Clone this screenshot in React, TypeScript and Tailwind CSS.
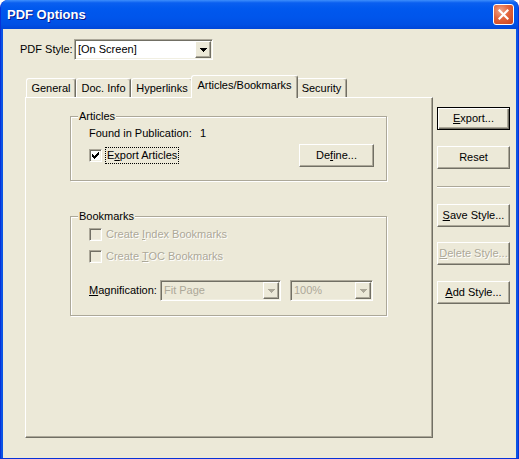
import React from "react";

const FONT = "font-['Liberation_Sans',Arial,sans-serif]";

const raised =
  "border border-t-white border-l-white border-r-[#716f64] border-b-[#716f64] shadow-[inset_-1px_-1px_0_#aca899]";
const sunken =
  "border border-t-[#aca899] border-l-[#aca899] border-r-white border-b-white shadow-[inset_1px_1px_0_#716f64,inset_-1px_-1px_0_#f1efe2]";
const disabledText = "text-[#aca899] [text-shadow:1px_1px_0_#ffffff]";

function Btn({
  children,
  w,
  def,
  disabled,
}: {
  children: React.ReactNode;
  w: string;
  def?: boolean;
  disabled?: boolean;
}) {
  const frame = def
    ? "border border-black shadow-[inset_1px_1px_0_#ffffff,inset_-1px_-1px_0_#716f64,inset_-2px_-2px_0_#aca899]"
    : raised;
  return (
    <div
      className={`${w} h-[23px] ${frame} bg-[#ece9d8] flex items-center justify-center text-[11px] leading-[13px] ${
        disabled ? disabledText : "text-black"
      }`}
    >
      {children}
    </div>
  );
}

function Arrow({ disabled }: { disabled?: boolean }) {
  return (
    <div className={`w-[16px] h-[17px] ${raised} bg-[#ece9d8] flex items-center justify-center`}>
      <svg width="7" height="4" viewBox="0 0 7 4" shapeRendering="crispEdges">
        <path d="M0 0H7V1H6V2H5V3H4V4H3V3H2V2H1V1H0Z" fill={disabled ? "#aca899" : "#000"} />
      </svg>
    </div>
  );
}

function Combo({
  text,
  w,
  disabled,
}: {
  text: string;
  w: string;
  disabled?: boolean;
}) {
  return (
    <div
      className={`${w} h-[21px] ${sunken} ${disabled ? "bg-[#ece9d8]" : "bg-white"} flex items-center justify-between pl-[3px] pr-[1px]`}
    >
      <span className={`text-[11px] leading-[13px] ${disabled ? "text-[#aca899]" : "text-black"}`}>{text}</span>
      <Arrow disabled={disabled} />
    </div>
  );
}

function Check({ checked, disabled }: { checked?: boolean; disabled?: boolean }) {
  return (
    <div className={`w-[13px] h-[13px] shrink-0 ${sunken} ${disabled ? "bg-[#ece9d8]" : "bg-white"} p-[1px]`}>
      {checked && (
        <svg width="9" height="9" viewBox="0 0 9 9" shapeRendering="crispEdges" className="block">
          <rect x="7" y="1" width="1" height="1" fill="#000" />
          <rect x="6" y="2" width="2" height="1" fill="#000" />
          <rect x="1" y="3" width="1" height="1" fill="#000" />
          <rect x="5" y="3" width="3" height="1" fill="#000" />
          <rect x="1" y="4" width="2" height="1" fill="#000" />
          <rect x="4" y="4" width="3" height="1" fill="#000" />
          <rect x="1" y="5" width="5" height="1" fill="#000" />
          <rect x="2" y="6" width="3" height="1" fill="#000" />
          <rect x="3" y="7" width="1" height="1" fill="#000" />
        </svg>
      )}
    </div>
  );
}

function Tab({ label, w, selected }: { label: string; w: string; selected?: boolean }) {
  if (selected) {
    return (
      <div
        className={`${w} h-[23px] -mb-[1px] -mx-[2px] relative z-10 bg-[#ece9d8] border-t border-l border-r border-t-white border-l-white border-r-[#716f64] shadow-[inset_-1px_0_0_#aca899] rounded-t-[3px] flex justify-center pt-[3px] text-[11px] leading-[13px] text-black`}
      >
        {label}
      </div>
    );
  }
  return (
    <div
      className={`${w} h-[19px] bg-[#ece9d8] border-t border-l border-r border-t-white border-l-white border-r-[#716f64] shadow-[inset_-1px_0_0_#aca899] rounded-t-[3px] flex justify-center pt-[3px] text-[11px] leading-[13px] text-black`}
    >
      {label}
    </div>
  );
}

function Group({
  label,
  h,
  children,
}: {
  label: string;
  h: string;
  children: React.ReactNode;
}) {
  return (
    <div className={`relative w-[317px] ${h} border border-[#aca899] shadow-[inset_1px_1px_0_#ffffff,1px_1px_0_#ffffff]`}>
      <span className="absolute -top-[7px] left-[7px] px-[1px] bg-[#ece9d8] text-[11px] leading-[13px] text-black">
        {label}
      </span>
      {children}
    </div>
  );
}

export default function App() {
  return (
    <div className={`w-[519px] h-[459px] bg-white ${FONT}`}>
      <div className="w-[519px] h-[459px] flex flex-col rounded-t-[8px] bg-[#0a53e4] border-x border-b border-[#0831d9] overflow-hidden">
        {/* Title bar */}
        <div className="h-[29px] shrink-0 -mx-[1px] flex items-center justify-between pl-[7px] pr-[5px] bg-[linear-gradient(180deg,#3d8efc_0%,#0a5ff0_10%,#0058ee_30%,#0055eb_60%,#0050e4_85%,#0046d8_100%)]">
          <span className="text-white font-bold text-[13px] leading-[16px] [text-shadow:1px_1px_0_#0a1a8a] mt-[1px]">
            PDF Options
          </span>
          <div className="w-[21px] h-[21px] rounded-[3px] border border-white bg-[radial-gradient(circle_at_35%_30%,#f0a58a_0%,#e2643c_45%,#c9401c_100%)] flex items-center justify-center">
            <svg width="11" height="11" viewBox="0 0 11 11">
              <path d="M1.5 1.5L9.5 9.5M9.5 1.5L1.5 9.5" stroke="#ffffff" strokeWidth="2.2" strokeLinecap="square" />
            </svg>
          </div>
        </div>

        {/* Client area */}
        <div className="flex-1 mx-[2px] bg-[#ece9d8] flex flex-col text-black">
          {/* PDF Style row */}
          <div className="flex items-center pt-[10px] pl-[17px]">
            <span className="w-[54px] text-[11px] leading-[13px]">PDF Style:</span>
            <Combo text="[On Screen]" w="w-[139px]" />
          </div>

          <div className="flex mt-[15px]">
            {/* Tabs + panel */}
            <div className="ml-[22px] w-[408px] flex flex-col">
              <div className="h-[22px] flex items-end pl-[1px]">
                <Tab label="General" w="w-[50px]" />
                <Tab label="Doc. Info" w="w-[55px]" />
                <Tab label="Hyperlinks" w="w-[62px]" />
                <Tab label="Articles/Bookmarks" w="w-[107px]" selected />
                <Tab label="Security" w="w-[51px]" />
              </div>
              <div className="h-[341px] border border-t-white border-l-white border-r-[#716f64] border-b-[#716f64] shadow-[inset_-1px_-1px_0_#aca899] pt-[18px] pl-[44px] flex flex-col">
                <Group label="Articles" h="h-[65px]">
                  <div className="pl-[18px] pr-[12px] pt-[10px] flex flex-col">
                    <div className="flex text-[11px] leading-[13px]">
                      <span className="w-[111px]">Found in Publication:</span>
                      <span>1</span>
                    </div>
                    <div className="mt-[4px] h-[23px] flex items-center justify-between">
                      <div className="flex items-center">
                        <Check checked />
                        <span className="ml-[3px] px-[1px] border border-dotted border-black text-[11px] leading-[15px]">
                          E<u>x</u>port Articles
                        </span>
                      </div>
                      <Btn w="w-[75px]">
                        <span>
                          De<u>f</u>ine...
                        </span>
                      </Btn>
                    </div>
                  </div>
                </Group>

                <div className="mt-[35px]">
                  <Group label="Bookmarks" h="h-[100px]">
                    <div className="pl-[18px] pt-[11px] flex flex-col">
                      <div className="h-[13px] flex items-center">
                        <Check disabled />
                        <span className={`ml-[4px] text-[11px] leading-[13px] ${disabledText}`}>
                          Create <u>I</u>ndex Bookmarks
                        </span>
                      </div>
                      <div className="mt-[9px] h-[13px] flex items-center">
                        <Check disabled />
                        <span className={`ml-[4px] text-[11px] leading-[13px] ${disabledText}`}>
                          Create <u>T</u>OC Bookmarks
                        </span>
                      </div>
                      <div className="mt-[17px] flex items-center">
                        <span className="w-[71px] text-[11px] leading-[13px]">
                          <u>M</u>agnification:
                        </span>
                        <Combo text="Fit Page" w="w-[121px]" disabled />
                        <div className="ml-[9px]">
                          <Combo text="100%" w="w-[83px]" disabled />
                        </div>
                      </div>
                    </div>
                  </Group>
                </div>
              </div>
            </div>

            {/* Right buttons */}
            <div className="ml-[4px] w-[73px] flex flex-col pt-[32px]">
              <Btn w="w-[73px]" def>
                <span>
                  <u>E</u>xport...
                </span>
              </Btn>
              <div className="mt-[16px]">
                <Btn w="w-[73px]">Reset</Btn>
              </div>
              <div className="mt-[17px] h-[2px] border-t border-b border-t-[#aca899] border-b-white" />
              <div className="mt-[16px]">
                <Btn w="w-[73px]">
                  <span>
                    <u>S</u>ave Style...
                  </span>
                </Btn>
              </div>
              <div className="mt-[15px]">
                <Btn w="w-[73px]" disabled>
                  <span>
                    <u>D</u>elete Style...
                  </span>
                </Btn>
              </div>
              <div className="mt-[16px]">
                <Btn w="w-[73px]">
                  <span>
                    <u>A</u>dd Style...
                  </span>
                </Btn>
              </div>
            </div>
          </div>
        </div>
      </div>
    </div>
  );
}
